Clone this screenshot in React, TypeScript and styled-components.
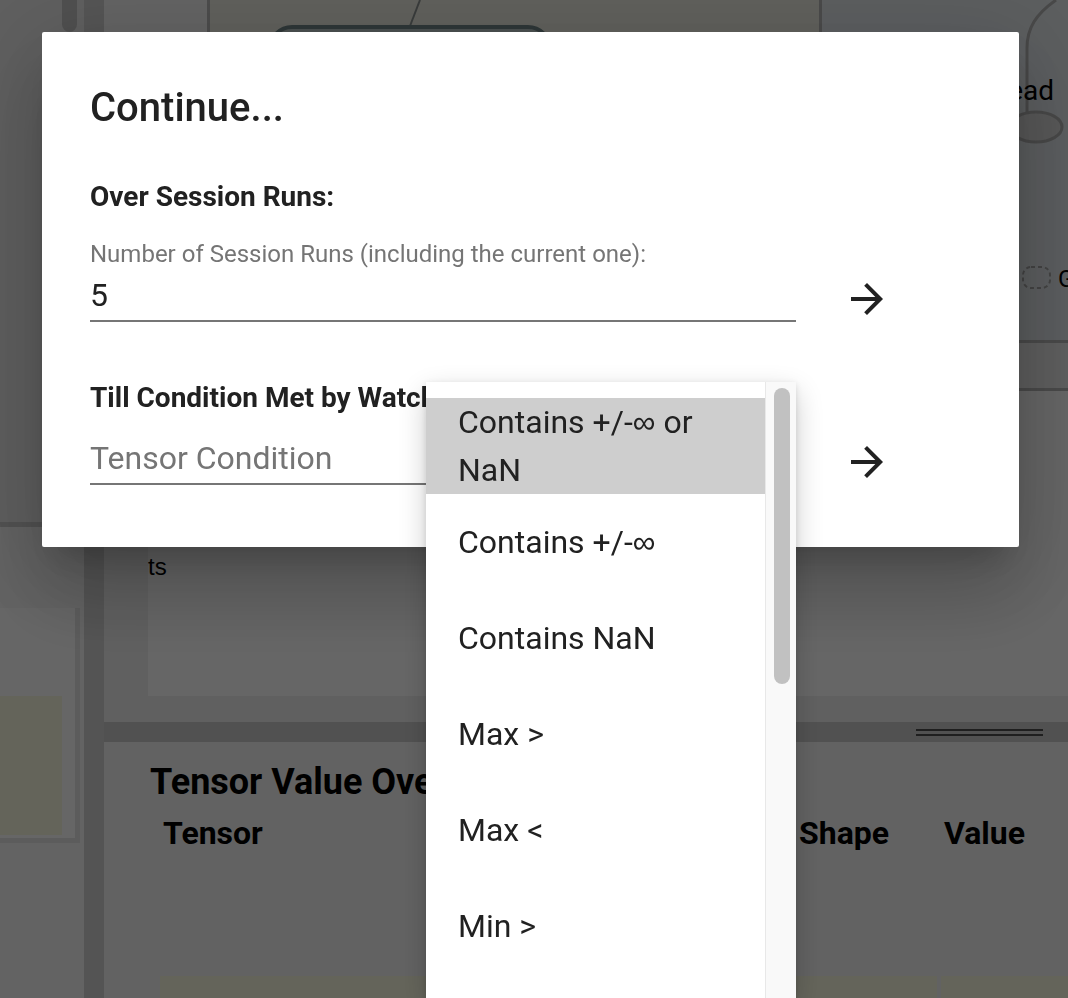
import React from "react";
import styled, { createGlobalStyle } from "styled-components";

const GlobalStyle = createGlobalStyle`
  html, body {
    margin: 0;
    padding: 0;
  }
  body {
    width: 1068px;
    height: 998px;
    overflow: hidden;
    font-family: Roboto, "Liberation Sans", Arial, sans-serif;
    color: #212121;
  }
  * {
    box-sizing: border-box;
  }
`;

const conditions = [
  "Contains +/-∞ or NaN",
  "Contains +/-∞",
  "Contains NaN",
  "Max >",
  "Max <",
  "Min >",
];

// the infinity sign looks narrower in the reference than Roboto's own
const withInfinity = (label: string) =>
  label.split("∞").flatMap((part, i) =>
    i === 0 ? [part] : [<Inf key={i}>∞</Inf>, part]
  );

const ArrowIcon = () => (
  <svg width="48" height="48" viewBox="0 0 24 24" aria-hidden="true">
    <path
      fill="currentColor"
      d="M12 4l-1.41 1.41L16.17 11H4v2h12.17l-5.58 5.59L12 20l8-8z"
    />
  </svg>
);

const App = () => {
  return (
    <>
      <GlobalStyle />
      <Page>
        <Sidebar>
          <SidebarTop>
            <SidebarThumb />
          </SidebarTop>
          <SidebarRule />
          <SidebarBottom>
            <Card>
              <Swatch />
            </Card>
          </SidebarBottom>
        </Sidebar>
        <VSplit />
        <Main>
          <GraphArea>
            <GraphGutter />
            <GraphCanvas>
              <svg width="609" height="340">
                <line x1="210" y1="0" x2="200" y2="26" stroke="#8e9494" strokeWidth="2" />
                <rect
                  x="60"
                  y="27"
                  width="280"
                  height="90"
                  rx="22"
                  fill="#b9c8c7"
                  stroke="#74898a"
                  strokeWidth="4"
                />
              </svg>
            </GraphCanvas>
            <GraphSide>
              <svg width="247" height="340">
                <path
                  d="M234 0 C 214 14, 205 28, 205 48 L 205 112"
                  fill="none"
                  stroke="#b4b4b4"
                  strokeWidth="3"
                />
                <ellipse
                  cx="214"
                  cy="127"
                  rx="26"
                  ry="15"
                  fill="#dcdcdc"
                  stroke="#b4b4b4"
                  strokeWidth="3"
                />
                <NodeLabel x="232" y="100" textAnchor="end">
                  Read
                </NodeLabel>
                <rect
                  x="201"
                  y="267"
                  width="27"
                  height="21"
                  rx="8"
                  fill="none"
                  stroke="#a8a8a8"
                  strokeWidth="2"
                  strokeDasharray="4 3"
                />
                <LegendLabel x="236" y="287">
                  G
                </LegendLabel>
              </svg>
            </GraphSide>
          </GraphArea>
          <Toolbar />
          <InfoPane>
            <InfoBox>
              <InfoText>ts</InfoText>
            </InfoBox>
          </InfoPane>
          <HSplit>
            <Grip />
          </HSplit>
          <BottomPane>
            <Heading>Tensor Value Overview</Heading>
            <TableRow>
              <HeadCell>Tensor</HeadCell>
              <HeadCell>Shape</HeadCell>
              <HeadCell>Value</HeadCell>
            </TableRow>
            <DataRow>
              <DataCell />
              <DataCell />
              <DataCell />
            </DataRow>
          </BottomPane>
        </Main>
      </Page>

      <Overlay>
        <Dialog>
          <Title>Continue...</Title>
          <SectionTitle $top={49}>Over Session Runs:</SectionTitle>
          <Row>
            <Field>
              <FieldLabel>
                Number of Session Runs (including the current one):
              </FieldLabel>
              <FieldInput>
                <Input value="5" readOnly />
              </FieldInput>
            </Field>
            <ArrowButton aria-label="Continue over session runs">
              <ArrowIcon />
            </ArrowButton>
          </Row>
          <SectionTitle $top={60}>Till Condition Met by Watched Tensor:</SectionTitle>
          <Row $top={24}>
            <Field>
              <FieldInput>
                <Input placeholder="Tensor Condition" readOnly />
              </FieldInput>
            </Field>
            <ArrowButton aria-label="Continue till condition met">
              <ArrowIcon />
            </ArrowButton>
          </Row>
        </Dialog>

        <Menu>
          <MenuList>
            {conditions.map((c, i) => (
              <MenuItem key={c} $selected={i === 0}>
                <span>{withInfinity(c)}</span>
              </MenuItem>
            ))}
          </MenuList>
          <ScrollTrack>
            <ScrollThumb />
          </ScrollTrack>
        </Menu>
      </Overlay>
    </>
  );
};

export default App;

/* ---------- page behind the dialog ---------- */

const Page = styled.div`
  display: flex;
  width: 1068px;
  height: 998px;
  overflow: hidden;
  background: #f5f5f5;
`;

const Sidebar = styled.aside`
  width: 84px;
  display: flex;
  flex-direction: column;
`;

const SidebarTop = styled.div`
  height: 522px;
  display: flex;
  justify-content: flex-end;
  padding-right: 7px;
  background: #ededed;
`;

const SidebarThumb = styled.div`
  width: 15px;
  height: 32px;
  border-radius: 0 0 8px 8px;
  background: #c6c6c6;
`;

const SidebarRule = styled.div`
  height: 5px;
  background: #cdcdcd;
`;

const SidebarBottom = styled.div`
  flex: 1;
  padding-top: 81px;
  background: #f7f7f7;
`;

const Card = styled.div`
  width: 80px;
  height: 235px;
  padding: 88px 13px 0 0;
  background: #fff;
  border-right: 5px solid #e6e6e6;
  border-bottom: 5px solid #e6e6e6;
`;

const Swatch = styled.div`
  height: 139px;
  background: #fafae1;
`;

const VSplit = styled.div`
  width: 20px;
  background: #d3d3d3;
`;

const Main = styled.main`
  flex: 1;
  display: flex;
  flex-direction: column;
  min-width: 0;
`;

const GraphArea = styled.div`
  height: 340px;
  display: flex;
`;

const GraphGutter = styled.div`
  width: 106px;
  background: #f7f7f7;
  border-right: 3px solid #bcbcbc;
`;

const GraphCanvas = styled.div`
  width: 612px;
  background: #f0f0e5;
  border-right: 3px solid #b8b8b8;
  overflow: hidden;
`;

const GraphSide = styled.div`
  flex: 1;
  background: #e5eaee;
  overflow: hidden;
`;

const NodeLabel = styled.text`
  font-family: Roboto, "Liberation Sans", sans-serif;
  font-size: 28px;
  fill: #000;
`;

const LegendLabel = styled.text`
  font-family: Roboto, "Liberation Sans", sans-serif;
  font-size: 24px;
  fill: #000;
`;

const Toolbar = styled.div`
  height: 51px;
  background: #ececec;
  border-top: 3px solid #b8b8b8;
  border-bottom: 3px solid #b8b8b8;
`;

const InfoPane = styled.div`
  flex: 1;
  padding: 0 0 26px 44px;
  background: #f0f0f0;
`;

const InfoBox = styled.div`
  height: 100%;
  padding-top: 162px;
  background: #fff;
`;

const InfoText = styled.div`
  font-family: "Liberation Sans", Arial, sans-serif;
  font-size: 24px;
  line-height: 28px;
  color: #000;
`;

const HSplit = styled.div`
  height: 20px;
  display: flex;
  justify-content: flex-end;
  align-items: center;
  padding-right: 25px;
  background: #cbcbcb;
`;

const Grip = styled.div`
  width: 127px;
  height: 7px;
  border-top: 2px solid #4e4e4e;
  border-bottom: 2px solid #4e4e4e;
`;

const BottomPane = styled.section`
  height: 256px;
  padding: 20px 0 0 46px;
  background: #f5f5f5;
`;

const Heading = styled.h3`
  margin: 0;
  font-size: 36px;
  line-height: 40px;
  font-weight: 700;
  color: #000;
  white-space: nowrap;
`;

const TableRow = styled.div`
  display: grid;
  grid-template-columns: 632px 141px 1fr;
  column-gap: 4px;
  margin: 11px 0 0 10px;
`;

const HeadCell = styled.div`
  padding-left: 3px;
  font-size: 32px;
  line-height: 40px;
  font-weight: 700;
  color: #000;
`;

const DataRow = styled(TableRow)`
  margin-top: 123px;
`;

const DataCell = styled.div`
  height: 40px;
  background: #fafae1;
`;

/* ---------- modal ---------- */

const Overlay = styled.div`
  position: fixed;
  top: 0;
  left: 0;
  width: 1068px;
  height: 998px;
  padding: 32px 0 0 42px;
  background: rgba(0, 0, 0, 0.6);
`;

const Dialog = styled.div`
  width: 977px;
  height: 515px;
  padding: 52px 48px 0;
  background: #fff;
  border-radius: 2px;
  box-shadow: 0 22px 30px -14px rgba(0, 0, 0, 0.2),
    0 48px 76px 6px rgba(0, 0, 0, 0.14), 0 18px 92px 16px rgba(0, 0, 0, 0.12);
`;

const Title = styled.h2`
  margin: 0;
  font-size: 40px;
  line-height: 48px;
  font-weight: 500;
  color: #212121;
`;

const SectionTitle = styled.div<{ $top: number }>`
  margin-top: ${(p) => p.$top}px;
  font-size: 28px;
  line-height: 32px;
  font-weight: 700;
  color: #212121;
  white-space: nowrap;
`;

const Row = styled.div<{ $top?: number }>`
  display: flex;
  align-items: flex-end;
  margin-top: ${(p) => p.$top ?? 27}px;
`;

const Field = styled.div`
  width: 706px;
`;

const FieldLabel = styled.div`
  margin-bottom: 8px;
  font-size: 24px;
  line-height: 28px;
  color: #757575;
  white-space: nowrap;
`;

const FieldInput = styled.div`
  padding-bottom: 6px;
  border-bottom: 2px solid #767676;
`;

const Input = styled.input`
  display: block;
  width: 100%;
  height: 38px;
  padding: 0;
  border: none;
  outline: none;
  background: transparent;
  font-family: Roboto, "Liberation Sans", sans-serif;
  font-size: 32px;
  color: #212121;

  &::placeholder {
    color: #757575;
    opacity: 1;
  }
`;

const ArrowButton = styled.button`
  width: 48px;
  height: 48px;
  margin: 0 0 -1px 47px;
  padding: 0;
  border: none;
  background: transparent;
  color: #212121;
  display: flex;
  align-items: center;
  justify-content: center;
`;

const Menu = styled.div`
  position: absolute;
  top: 382px;
  left: 426px;
  width: 370px;
  height: 616px;
  display: flex;
  overflow: hidden;
  background: #fff;
  box-shadow: 0 10px 26px rgba(0, 0, 0, 0.2), 0 2px 6px rgba(0, 0, 0, 0.12);
`;

const MenuList = styled.div`
  flex: 1;
  padding-top: 16px;
`;

const MenuItem = styled.div<{ $selected?: boolean }>`
  min-height: 96px;
  display: flex;
  align-items: center;
  padding: 0 32px;
  font-size: 32px;
  line-height: 48px;
  color: #212121;
  background: ${(p) => (p.$selected ? "#cecece" : "transparent")};
`;

const Inf = styled.span`
  font-family: "Liberation Sans", Arial, sans-serif;
`;

const ScrollTrack = styled.div`
  width: 31px;
  padding: 6px 6px 0 8px;
  background: #f9f9f9;
  border-left: 1px solid #e8e8e8;
`;

const ScrollThumb = styled.div`
  height: 296px;
  border-radius: 8px;
  background: #c1c1c1;
`;
